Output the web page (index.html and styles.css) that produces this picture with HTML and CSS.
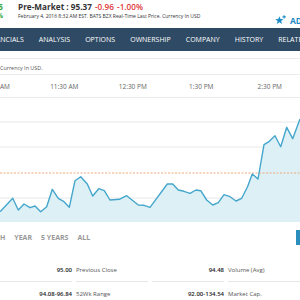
FILE: index.html
```html
<!DOCTYPE html>
<html lang="en">
<head>
    <meta charset="UTF-8">
    <title>Quote</title>
    <link rel="stylesheet" href="styles.css">
</head>
<body>
<div class="page">
    <header class="quote">
        <div class="quote-left">
            <div class="up big">5</div>
            <div class="up">6%</div>
        </div>
        <div class="quote-main">
            <div class="pre"><b>Pre-Market : 95.37</b> <span class="down">-0.96</span> <span class="down">-1.00%</span></div>
            <div class="stamp">February 4, 2016 8:32 AM EST. BATS BZX Real-Time Last Price. Currency In USD</div>
        </div>
        <div class="watch">
            <svg width="11" height="11" viewBox="0 0 10 10">
                <path d="M4 1.2 L5 3.7 L7.8 3.8 L5.6 5.5 L6.4 8.2 L4 6.6 L1.6 8.2 L2.4 5.5 L0.2 3.8 L3 3.7 Z" fill="#1a8cc8"/>
                <path d="M8.3 0.2 V3.2 M6.8 1.7 H9.8" stroke="#1a8cc8" stroke-width="1"/>
            </svg>
            <span>ADD TO WATCHLIST</span>
        </div>
    </header>

    <nav class="tabs">
        <span>Financials</span>
        <span>Analysis</span>
        <span>Options</span>
        <span>Ownership</span>
        <span>Company</span>
        <span>History</span>
        <span>Related</span>
    </nav>

    <div class="note">Currency In USD.</div>

    <div class="axis">
        <span>10:30 AM</span>
        <span>11:30 AM</span>
        <span>12:30 PM</span>
        <span>1:30 PM</span>
        <span>2:30 PM</span>
    </div>

    <svg class="chart" width="300" height="124" viewBox="0 98 300 124">
        <line x1="0" y1="122" x2="300" y2="122" class="grid"/>
        <line x1="0" y1="147" x2="300" y2="147" class="grid"/>
        <line x1="0" y1="198" x2="300" y2="198" class="grid"/>
        <path class="area" d="M0 211.7 L12.7 198.3 L18.3 210 L24 204 L30 207.7 L35 206 L40.7 211.7 L46.7 206.7 L52.3 189.3 L58.3 198.3 L64 201.7 L69.3 207.3 L75 180.7 L80.7 176.7 L87.3 184 L92.7 196 L98.7 188.7 L104.3 190.7 L110 200 L119.3 199.3 L126.7 195.7 L138.3 205 L144 205.3 L150 207.3 L167.3 184 L172.7 184 L178.3 190 L184 191.3 L190 193.3 L196 190 L200.7 190.7 L206.7 200 L212.7 205 L218.3 202.7 L224 194.7 L230 196.7 L236 201 L241.7 198.3 L247.3 187.3 L252.3 174 L258 179 L264 144.7 L269.3 141.3 L275 135.7 L280.7 146.7 L286.7 127.3 L292.7 138.7 L300 119 L300 222 L0 222 Z"/>
        <line x1="0" y1="173" x2="300" y2="173" class="prev"/>
        <path class="line" d="M0 211.7 L12.7 198.3 L18.3 210 L24 204 L30 207.7 L35 206 L40.7 211.7 L46.7 206.7 L52.3 189.3 L58.3 198.3 L64 201.7 L69.3 207.3 L75 180.7 L80.7 176.7 L87.3 184 L92.7 196 L98.7 188.7 L104.3 190.7 L110 200 L119.3 199.3 L126.7 195.7 L138.3 205 L144 205.3 L150 207.3 L167.3 184 L172.7 184 L178.3 190 L184 191.3 L190 193.3 L196 190 L200.7 190.7 L206.7 200 L212.7 205 L218.3 202.7 L224 194.7 L230 196.7 L236 201 L241.7 198.3 L247.3 187.3 L252.3 174 L258 179 L264 144.7 L269.3 141.3 L275 135.7 L280.7 146.7 L286.7 127.3 L292.7 138.7 L300 119"/>
    </svg>

    <div class="ranges">
        <div class="range-list">
            <span>Month</span>
            <span>Year</span>
            <span>5 Years</span>
            <span>All</span>
        </div>
        <div class="range-btn"></div>
    </div>

    <table class="stats">
        <tr>
            <td class="val">95.00</td><td class="lbl">Previous Close</td>
            <td class="val">94.48</td><td class="lbl">Volume (Avg)</td>
        </tr>
        <tr>
            <td class="val">94.08-96.84</td><td class="lbl">52Wk Range</td>
            <td class="val">92.00-134.54</td><td class="lbl">Market Cap.</td>
        </tr>
    </table>
</div>
</body>
</html>
```

FILE: styles.css
```css
* {
    box-sizing: border-box;
    margin: 0;
    padding: 0;
}

body {
    font-family: 'Open Sans', 'DejaVu Sans', sans-serif;
    background: #fff;
    color: #333;
}

.page {
    width: 300px;
    height: 300px;
    overflow: hidden;
    white-space: nowrap;
}

.quote {
    display: flex;
    height: 28px;
    padding-top: 1px;
}

.quote-left {
    width: 26px;
    margin-left: -8px;
    text-align: right;
    padding-right: 15px;
    flex-shrink: 0;
}

.up {
    color: #3aa63a;
    font-weight: bold;
    font-size: 7px;
    line-height: 8px;
}

.up.big {
    font-size: 8.2px;
    line-height: 11px;
}

.quote-main {
    width: 257px;
    flex-shrink: 0;
}

.pre {
    font-size: 8.2px;
    line-height: 11px;
    color: #333;
}

.down {
    color: #e0383a;
    font-weight: 600;
    margin-left: 1px;
}

.stamp {
    font-size: 5px;
    line-height: 8px;
    color: #333;
}

.watch {
    display: flex;
    align-items: center;
    gap: 4px;
    padding-top: 13px;
    color: #1a8cc8;
    font-weight: bold;
    font-size: 8.5px;
    flex-shrink: 0;
    height: 12px;
    box-sizing: content-box;
}

.tabs {
    display: flex;
    gap: 15px;
    height: 23px;
    align-items: center;
    background: #2e4a64;
    color: #fff;
    font-size: 7px;
    text-transform: uppercase;
    margin-left: -15px;
}

.note {
    margin-top: 7px;
    border-top: 1px solid #ececec;
    border-bottom: 1px solid #ececec;
    height: 17px;
    font-size: 5.4px;
    line-height: 18px;
    color: #555;
}

.axis {
    display: flex;
    height: 23px;
    align-items: center;
    margin-left: -38.5px;
    border-bottom: 1px solid #ececec;
    font-size: 6.5px;
    color: #666;
}

.axis span {
    width: 68.5px;
    flex-shrink: 0;
    text-align: center;
}

.chart {
    display: block;
}

.grid {
    stroke: #e8e8e8;
    stroke-width: 1;
}

.prev {
    stroke: #f2a878;
    stroke-width: 1;
    stroke-dasharray: 2 1.5;
}

.area {
    fill: #dcf0f5;
}

.line {
    fill: none;
    stroke: #45a6cc;
    stroke-width: 1.4;
    stroke-linejoin: round;
}

.ranges {
    display: flex;
    justify-content: space-between;
    align-items: center;
    height: 28px;
    padding-top: 2px;
}

.range-list {
    display: flex;
    gap: 9px;
    margin-left: -22px;
    font-size: 7px;
    font-weight: bold;
    color: #999;
    text-transform: uppercase;
}

.range-btn {
    width: 8px;
    height: 15px;
    margin-right: -4px;
    background: #2b8fbd;
}

.stats {
    margin-top: 8px;
    border-collapse: separate;
    border-spacing: 4px 0;
    margin-left: -4px;
    width: 308px;
    font-size: 6px;
}

.stats td {
    height: 24px;
    border-bottom: 1px solid #e6e6e6;
}

.stats tr:last-child td {
    border-bottom: none;
}

.val {
    width: 69px;
    text-align: right;
    font-weight: 600;
    color: #222;
}

.lbl {
    width: 69px;
    color: #555;
}
```
